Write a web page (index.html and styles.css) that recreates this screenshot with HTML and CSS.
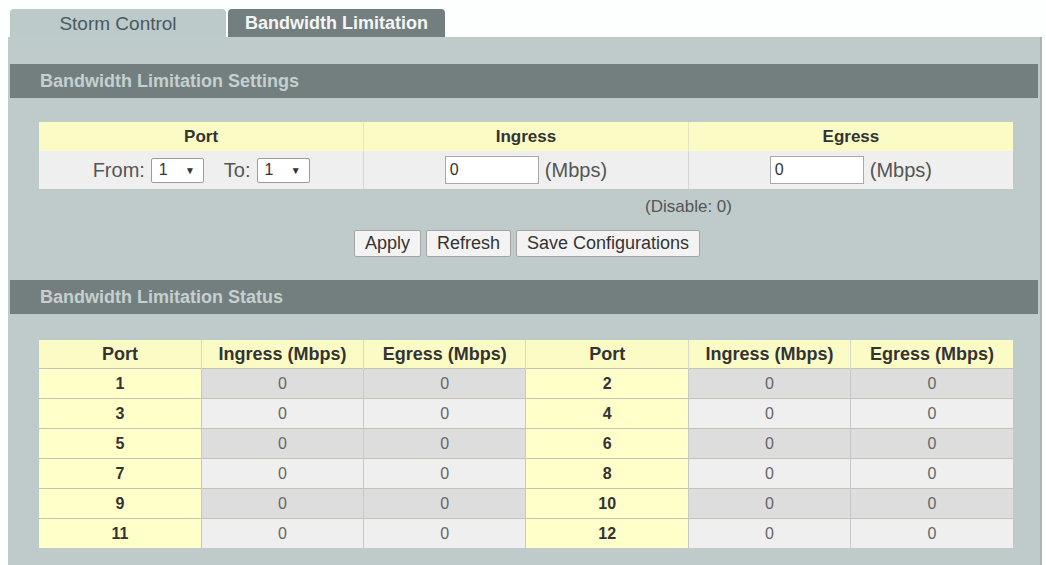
FILE: index.html
```html
<!DOCTYPE html>
<html lang="en">

<head>
    <meta charset="UTF-8">
    <title>Bandwidth Limitation</title>
    <link rel="stylesheet" href="styles.css">
</head>

<body>

    <div class="tabs">
        <div class="tab">Storm Control</div>
        <div class="tab active">Bandwidth Limitation</div>
    </div>

    <div class="panel">
        <div class="section_title">Bandwidth Limitation Settings</div>

        <table class="settings">
            <tr>
                <th>Port</th>
                <th>Ingress</th>
                <th>Egress</th>
            </tr>
            <tr>
                <td>
                    <span class="cell_row">
                        From: <span class="select">1 <span class="arrow">&#9660;</span></span>
                        <span class="to">To:</span> <span class="select">1 <span class="arrow">&#9660;</span></span>
                    </span>
                </td>
                <td><span class="cell_row"><input type="text" value="0"> (Mbps)</span></td>
                <td><span class="cell_row"><input type="text" value="0"> (Mbps)</span></td>
            </tr>
        </table>

        <div class="hint">(Disable: 0)</div>

        <div class="buttons">
            <button>Apply</button>
            <button>Refresh</button>
            <button>Save Configurations</button>
        </div>

        <div class="section_title">Bandwidth Limitation Status</div>

        <table class="status">
            <tr>
                <th>Port</th>
                <th>Ingress (Mbps)</th>
                <th>Egress (Mbps)</th>
                <th>Port</th>
                <th>Ingress (Mbps)</th>
                <th>Egress (Mbps)</th>
            </tr>
            <tr class="dark"><td class="port">1</td><td>0</td><td>0</td><td class="port">2</td><td>0</td><td>0</td></tr>
            <tr><td class="port">3</td><td>0</td><td>0</td><td class="port">4</td><td>0</td><td>0</td></tr>
            <tr class="dark"><td class="port">5</td><td>0</td><td>0</td><td class="port">6</td><td>0</td><td>0</td></tr>
            <tr><td class="port">7</td><td>0</td><td>0</td><td class="port">8</td><td>0</td><td>0</td></tr>
            <tr class="dark"><td class="port">9</td><td>0</td><td>0</td><td class="port">10</td><td>0</td><td>0</td></tr>
            <tr><td class="port">11</td><td>0</td><td>0</td><td class="port">12</td><td>0</td><td>0</td></tr>
        </table>
    </div>

</body>

</html>
```

FILE: styles.css
```css
body {
    font-family: "Liberation Sans", Arial, sans-serif;
    margin: 0;
    padding: 9px 4px 0 8px;
    background-color: #fdfefe;
}

.tabs {
    display: flex;
    gap: 2px;
    padding-left: 2px;
}

.tab {
    width: 216px;
    height: 28px;
    line-height: 29px;
    text-align: center;
    font-size: 19px;
    color: #4b5961;
    background-color: #bccaca;
    border-radius: 4px 4px 0 0;
}

.tab.active {
    width: 217px;
    background-color: #737f7f;
    color: #f4f6f6;
    font-weight: bold;
    font-size: 18px;
}

.panel {
    background-color: #bfcbcb;
    padding: 27px 2px 18px 2px;
    border-right: 2px solid #a9b4b4;
}

.section_title {
    background-color: #737f7f;
    color: #c6cfcf;
    font-weight: bold;
    font-size: 18px;
    height: 34px;
    line-height: 34px;
    padding-left: 30px;
}

table {
    border-collapse: collapse;
    margin-left: 29px;
    width: 974px;
    table-layout: fixed;
}

th,
td {
    padding: 0;
}

.settings {
    margin-top: 24px;
}

.settings th {
    background-color: #fbfbc6;
    color: #333;
    font-size: 17px;
    height: 29px;
    border-right: 1px solid #e4e4c4;
}

.settings td {
    background-color: #efefef;
    color: #555;
    font-size: 20px;
    text-align: center;
    height: 38px;
    border-right: 1px solid #d6d6d6;
}

.settings th:last-child,
.settings td:last-child {
    border-right: none;
}

.cell_row {
    display: inline-flex;
    align-items: center;
    gap: 6px;
}

.to {
    margin-left: 14px;
}

.select {
    display: inline-flex;
    justify-content: space-between;
    align-items: center;
    box-sizing: border-box;
    width: 53px;
    height: 25px;
    border: 1px solid #9c9c9c;
    border-radius: 2px;
    background-color: #fff;
    color: #333;
    font-size: 16px;
    padding: 0 8px 0 7px;
}

.arrow {
    font-size: 10px;
}

.settings input {
    box-sizing: border-box;
    width: 94px;
    height: 28px;
    border: 1px solid #a8a8a8;
    font-family: "Liberation Sans", Arial, sans-serif;
    font-size: 16px;
    color: #333;
    padding: 0 4px;
}

.hint {
    box-sizing: border-box;
    margin-left: 516px;
    width: 325px;
    text-align: center;
    font-size: 17px;
    color: #555;
    padding-top: 8px;
    height: 41px;
}

.buttons {
    display: flex;
    justify-content: center;
    gap: 5px;
    padding-bottom: 23px;
    margin-left: 6px;
}

.buttons button {
    font-family: "Liberation Sans", Arial, sans-serif;
    font-size: 18px;
    color: #333;
    height: 27px;
    padding: 0 10px;
    background-color: #f3f3f3;
    border: 1px solid #a5a5a5;
    border-radius: 2px;
}

.status {
    margin-top: 26px;
}

.status th {
    background-color: #fbfbc6;
    color: #333;
    font-size: 18px;
    height: 28px;
    border-right: 1px solid #d8d8d0;
}

.status td {
    background-color: #efefef;
    color: #666;
    font-size: 16px;
    text-align: center;
    height: 29px;
    border-right: 1px solid #c8c8c8;
    border-top: 1px solid #c4c4b4;
}

.status tr.dark td {
    background-color: #dddddd;
}

.status td.port,
.status tr.dark td.port {
    background-color: #ffffc9;
    color: #333;
    font-weight: bold;
}

.status td:last-child,
.status th:last-child {
    border-right: none;
}
```
